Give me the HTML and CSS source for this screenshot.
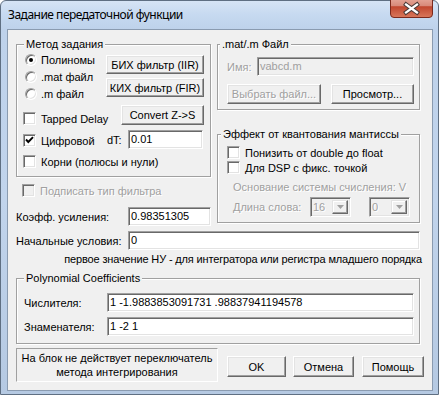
FILE: index.html
```html
<!DOCTYPE html>
<html>
<head>
<meta charset="utf-8">
<link rel="stylesheet" href="styles.css">
</head>
<body>
<div class="window">
  <div class="titlebar">
    <span class="title">Задание передаточной функции</span>
    <div class="close">
      <svg width="43" height="18" viewBox="0 0 43 18">
        <defs>
          <linearGradient id="cg" x1="0" y1="0" x2="0" y2="1">
            <stop offset="0" stop-color="#eab1a4"/>
            <stop offset="0.45" stop-color="#d88a7a"/>
            <stop offset="0.5" stop-color="#c1472f"/>
            <stop offset="1" stop-color="#d9785c"/>
          </linearGradient>
        </defs>
        <rect x="0.5" y="-4" width="42" height="21.5" rx="3.5" fill="url(#cg)" stroke="#7b2a1d"/>
        <path d="M16 4.5 L27 12.5 M27 4.5 L16 12.5" stroke="#4a3a38" stroke-width="4.2" stroke-linecap="square"/>
        <path d="M16 4.5 L27 12.5 M27 4.5 L16 12.5" stroke="#ffffff" stroke-width="2.2" stroke-linecap="square"/>
      </svg>
    </div>
  </div>
  <div class="client">
    <div class="top">
      <div class="leftcol">
        <div class="group g-method">
          <div class="legend lg-method">Метод задания</div>
          <div class="m-row-a">
            <div class="radios">
              <div class="opt"><span class="radio on"></span><span>Полиномы</span></div>
              <div class="opt"><span class="radio"></span><span>.mat файл</span></div>
              <div class="opt"><span class="radio"></span><span>.m файл</span></div>
            </div>
            <div class="btnstack">
              <div class="btn b-iir">БИХ фильтр (IIR)</div>
              <div class="btn b-iir">КИХ фильтр (FIR)</div>
            </div>
          </div>
          <div class="m-row-b">
            <div class="opt o-tapped"><span class="check"></span><span>Tapped Delay</span></div>
            <div class="btn b-convert">Convert Z-&gt;S</div>
          </div>
          <div class="m-row-c">
            <div class="opt o-dig"><span class="check"><svg width="13" height="13" viewBox="0 0 13 13"><path d="M3 5.5 L5.3 8 L10 3.2" fill="none" stroke="#000" stroke-width="1.9"/></svg></span><span>Цифровой</span></div>
            <span class="lbl-dt">dT:</span>
            <div class="edit e-dt">0.01</div>
          </div>
          <div class="opt o-roots"><span class="check"></span><span>Корни (полюсы и нули)</span></div>
        </div>
        <div class="opt o-sign"><span class="check dis"></span><span class="dis-text">Подписать тип фильтра</span></div>
        <div class="field-row r-gain"><span class="flabel">Коэфф. усиления:</span><div class="edit e-gain">0.98351305</div></div>
      </div>
      <div class="rightcol">
        <div class="group g-file">
          <div class="legend lg-file">.mat/.m Файл</div>
          <div class="f-row-name"><span class="dis-text lbl-name">Имя:</span><div class="edit e-name dis">vabcd.m</div></div>
          <div class="f-row-btns"><div class="btn b-choose dis-text">Выбрать файл...</div><div class="btn b-view">Просмотр...</div></div>
        </div>
        <div class="group g-effect">
          <div class="legend lg-effect">Эффект от квантования мантиссы</div>
          <div class="opt o-eff o-eff1"><span class="check"></span><span>Понизить от double до float</span></div>
          <div class="opt o-eff"><span class="check"></span><span>Для DSP с фикс. точкой</span></div>
          <div class="dis-text base">Основание системы счисления: V</div>
          <div class="len-row">
            <span class="dis-text lbl-len">Длина слова:</span>
            <div class="combo"><span class="dis-text ctext">16</span><span class="cbtn"><svg width="7" height="4" viewBox="0 0 7 4"><path d="M0 0 H7 L3.5 4 Z" fill="#a0a0a0"/></svg></span></div>
            <div class="combo c2"><span class="dis-text ctext">0</span><span class="cbtn"><svg width="7" height="4" viewBox="0 0 7 4"><path d="M0 0 H7 L3.5 4 Z" fill="#a0a0a0"/></svg></span></div>
          </div>
        </div>
      </div>
    </div>
    <div class="field-row r-init"><span class="flabel">Начальные условия:</span><div class="edit e-init">0</div></div>
    <div class="note">первое значение НУ - для интегратора или регистра младшего порядка</div>
    <div class="group g-poly">
      <div class="legend lg-poly">Polynomial Coefficients</div>
      <div class="p-row p-row1"><span class="plabel">Числителя:</span><div class="edit e-poly">1 -1.9883853091731 .98837941194578</div></div>
      <div class="p-row p-row2"><span class="plabel">Знаменателя:</span><div class="edit e-poly">1 -2 1</div></div>
    </div>
    <div class="bottom">
      <div class="static">На блок не действует переключатель<br>метода интегрирования</div>
      <div class="btn b-ok">OK</div>
      <div class="btn b-cancel">Отмена</div>
      <div class="btn b-help">Помощь</div>
    </div>
  </div>
</div>
</body>
</html>
```
FILE: styles.css
```css
* { box-sizing: border-box; }
html, body { margin: 0; padding: 0; }
body {
  width: 439px;
  height: 395px;
  overflow: hidden;
  background: #ffffff;
  font-family: "Liberation Sans", Arial, sans-serif;
  font-size: 11px;
  color: #000;
}
.window {
  width: 439px;
  height: 395px;
  display: flex;
  flex-direction: column;
  border: 1px solid #5f6f82;
  border-radius: 6px 6px 0 0;
  padding: 0 5px 0 6px;
  background: linear-gradient(180deg, #d6e4f5 0px, #c6d9f0 14px, #bed2eb 28px, #c1d4ec 200px, #b5c9e2 395px);
}
.titlebar {
  height: 28px;
  display: flex;
  align-items: flex-start;
  flex: none;
}
.title {
  font-family: "Noto Sans", "Open Sans", sans-serif;
  font-size: 12px;
  line-height: 16px;
  margin-top: 6px;
  margin-left: 1px;
  color: #000;
  letter-spacing: -0.5px;
}
.close {
  margin-left: auto;
  margin-top: -1px;
  width: 43px;
  height: 18px;
}
.close svg { display: block; }

.client {
  flex: none;
  height: 362px;
  background: #f0f0f0;
  border: 1px solid #8a9bb0;
  padding: 14px 12px 0 8px;
  display: flex;
  flex-direction: column;
}

/* generic controls */
.group {
  border: 1px solid #a0a0a0;
  box-shadow: inset 1px 1px 0 #fff, 1px 1px 0 #fff;
  flex: none;
}
.legend {
  width: fit-content;
  height: 13px;
  line-height: 13px;
  margin-top: -7px;
  padding: 0 2px;
  background: #f0f0f0;
  white-space: nowrap;
}
.opt {
  display: flex;
  align-items: center;
  height: 17px;
  white-space: nowrap;
  flex: none;
}
.radio {
  width: 12px;
  height: 12px;
  margin: 0 4px 0 2px;
  border-radius: 50%;
  background: #fff;
  border: 1px solid;
  border-color: #a0a0a0 #ffffff #ffffff #a0a0a0;
  box-shadow: inset 1px 1px 0 #696969, inset -1px -1px 0 #e3e3e3;
  display: flex;
  align-items: center;
  justify-content: center;
  flex: none;
}
.radio.on::after {
  content: "";
  width: 4px;
  height: 4px;
  border-radius: 50%;
  background: #000;
}
.check {
  width: 13px;
  height: 13px;
  margin-right: 5px;
  background: #fff;
  border: 1px solid;
  border-color: #a0a0a0 #ffffff #ffffff #a0a0a0;
  box-shadow: inset 1px 1px 0 #696969, inset -1px -1px 0 #e3e3e3;
  flex: none;
}
.check svg { display: block; margin: -1px; }
.check.dis { background: #f0f0f0; }
.dis-text {
  color: #a0a0a0;
  text-shadow: 1px 1px 0 #ffffff;
}
.btn {
  display: flex;
  align-items: center;
  justify-content: center;
  background: #f0f0f0;
  border: 1px solid;
  border-color: #ffffff #696969 #696969 #ffffff;
  box-shadow: inset -1px -1px 0 #a0a0a0, inset 1px 1px 0 #e3e3e3;
  white-space: nowrap;
  flex: none;
}
.edit {
  height: 19px;
  line-height: 15px;
  padding: 1px 2px;
  background: #fff;
  border: 1px solid;
  border-color: #a0a0a0 #ffffff #ffffff #a0a0a0;
  box-shadow: inset 1px 1px 0 #696969, inset -1px -1px 0 #e3e3e3;
  white-space: nowrap;
  overflow: hidden;
  flex: none;
}
.edit.dis { background: #f0f0f0; color: #a0a0a0; }

/* layout */
.top {
  display: flex;
  align-items: flex-start;
  flex: none;
}
.leftcol {
  width: 195px;
  display: flex;
  flex-direction: column;
  flex: none;
}
.rightcol {
  width: 203px;
  margin-left: 6px;
  display: flex;
  flex-direction: column;
  flex: none;
}

/* method group */
.g-method { height: 133px; }
.lg-method { margin-left: 7px; }
.m-row-a {
  display: flex;
  padding-left: 6px;
}
.radios {
  width: 83px;
  display: flex;
  flex-direction: column;
}
.btnstack {
  display: flex;
  flex-direction: column;
  gap: 4px;
  margin-top: 4px;
}
.b-iir { width: 98px; height: 19px; }
.m-row-b {
  display: flex;
  align-items: flex-start;
  padding-left: 6px;
}
.o-tapped { width: 98px; margin-top: 8px; }
.b-convert { width: 83px; height: 20px; margin-top: 3px; }
.m-row-c {
  display: flex;
  align-items: flex-start;
  padding-left: 6px;
}
.o-dig { width: 84px; margin-top: 5px; }
.lbl-dt { width: 21px; margin-top: 5px; line-height: 17px; }
.e-dt { width: 75px; margin-top: 3px; }
.o-roots { margin-top: 4px; margin-left: 6px; }

.o-sign { margin-top: 5px; margin-left: 6px; }
.field-row {
  display: flex;
  align-items: center;
  flex: none;
}
.flabel { width: 112px; flex: none; }
.r-gain { margin-top: 8px; }
.e-gain { width: 83px; }

/* file group */
.g-file { height: 66px; }
.lg-file { margin-left: 2px; }
.f-row-name {
  display: flex;
  align-items: center;
  padding-left: 9px;
  margin-top: 6px;
}
.lbl-name { width: 30px; }
.e-name { width: 157px; }
.f-row-btns {
  display: flex;
  padding-left: 9px;
  margin-top: 8px;
}
.b-choose { width: 94px; height: 20px; }
.b-view { width: 83px; height: 20px; margin-left: 10px; }

/* effect group */
.g-effect { height: 89px; margin-top: 24px; }
.lg-effect { margin-left: 3px; }
.o-eff { height: 15px; padding-left: 9px; }
.o-eff1 { margin-top: 4px; }
.base {
  height: 15px;
  line-height: 15px;
  margin-top: 5px;
  padding-left: 15px;
  white-space: nowrap;
}
.len-row {
  display: flex;
  align-items: center;
  margin-top: 2px;
  padding-left: 15px;
  height: 20px;
}
.lbl-len { width: 77px; flex: none; }
.combo {
  width: 41px;
  height: 20px;
  display: flex;
  align-items: stretch;
  padding: 2px;
  background: #f0f0f0;
  border: 1px solid;
  border-color: #a0a0a0 #ffffff #ffffff #a0a0a0;
  box-shadow: inset 1px 1px 0 #696969, inset -1px -1px 0 #e3e3e3;
  flex: none;
}
.c2 { margin-left: 18px; }
.ctext { flex: 1; line-height: 14px; }
.cbtn {
  width: 16px;
  display: flex;
  align-items: center;
  justify-content: center;
  border: 1px solid;
  border-color: #e3e3e3 #696969 #696969 #e3e3e3;
  box-shadow: inset -1px -1px 0 #a0a0a0, inset 1px 1px 0 #ffffff;
  background: #f0f0f0;
}
.cbtn svg { display: block; }

/* init */
.r-init { margin-top: 5px; }
.e-init { width: 292px; }
.note {
  height: 13px;
  line-height: 13px;
  margin-top: 3px;
  margin-right: -2px;
  text-align: right;
  white-space: nowrap;
  letter-spacing: -0.15px;
  flex: none;
}

/* poly */
.g-poly { height: 66px; margin-top: 12px; }
.lg-poly { margin-left: 7px; }
.p-row {
  display: flex;
  align-items: center;
  padding-left: 7px;
}
.p-row1 { margin-top: 8px; }
.p-row2 { margin-top: 5px; }
.plabel { width: 83px; flex: none; }
.e-poly { width: 307px; }

/* bottom */
.bottom {
  display: flex;
  align-items: flex-start;
  margin-top: 4px;
  flex: none;
}
.static {
  width: 202px;
  height: 34px;
  border: 1px solid;
  border-color: #a0a0a0 #ffffff #ffffff #a0a0a0;
  text-align: center;
  line-height: 14px;
  padding-top: 2px;
  white-space: nowrap;
  flex: none;
}
.b-ok { width: 59px; height: 21px; margin-top: 8px; margin-left: 9px; }
.b-cancel { width: 61px; height: 21px; margin-top: 8px; margin-left: 7px; }
.b-help { width: 62px; height: 21px; margin-top: 8px; margin-left: 8px; }
```
